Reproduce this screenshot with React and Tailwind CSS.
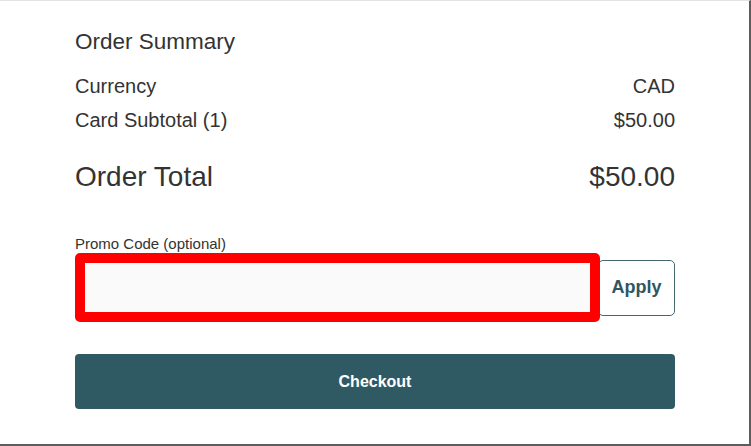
export default function App() {
  return (
    <div className="w-[751px] h-[446px] bg-white border-t border-t-[#e3e3e3] border-r-2 border-r-[#5c5c5c] border-b-2 border-b-[#5c5c5c] pl-[75px] pt-[28px] text-[#333333] font-['Liberation_Sans',Arial,sans-serif]">
      <div className="w-[600px]">
        <h2 className="text-[22.5px] leading-[26px]">Order Summary</h2>

        <div className="mt-[19px] flex justify-between text-[20px] leading-[24px]">
          <span>Currency</span>
          <span>CAD</span>
        </div>
        <div className="mt-[10px] flex justify-between text-[20px] leading-[24px]">
          <span>Card Subtotal (1)</span>
          <span>$50.00</span>
        </div>

        <div className="mt-[29px] flex justify-between text-[28px] leading-[32px]">
          <span>Order Total</span>
          <span>$50.00</span>
        </div>

        <label className="mt-[42px] block text-[15px] leading-[18px]">Promo Code (optional)</label>

        <div className="flex items-center">
          <div className="relative z-10 w-[525px] h-[69px] rounded-[5px] border-[10px] border-[#ff0000] bg-[#fafafa]">
            <input className="w-full h-full bg-transparent outline-none px-3" />
          </div>
          <button className="-ml-[2px] w-[77px] h-[56px] rounded-[5px] border border-[#456770] bg-white text-[18px] font-bold text-[#2f5661]">
            Apply
          </button>
        </div>

        <button className="mt-[32px] w-full h-[55px] rounded-[4px] bg-[#305a63] text-white text-[16px] font-bold">
          Checkout
        </button>
      </div>
    </div>
  );
}
